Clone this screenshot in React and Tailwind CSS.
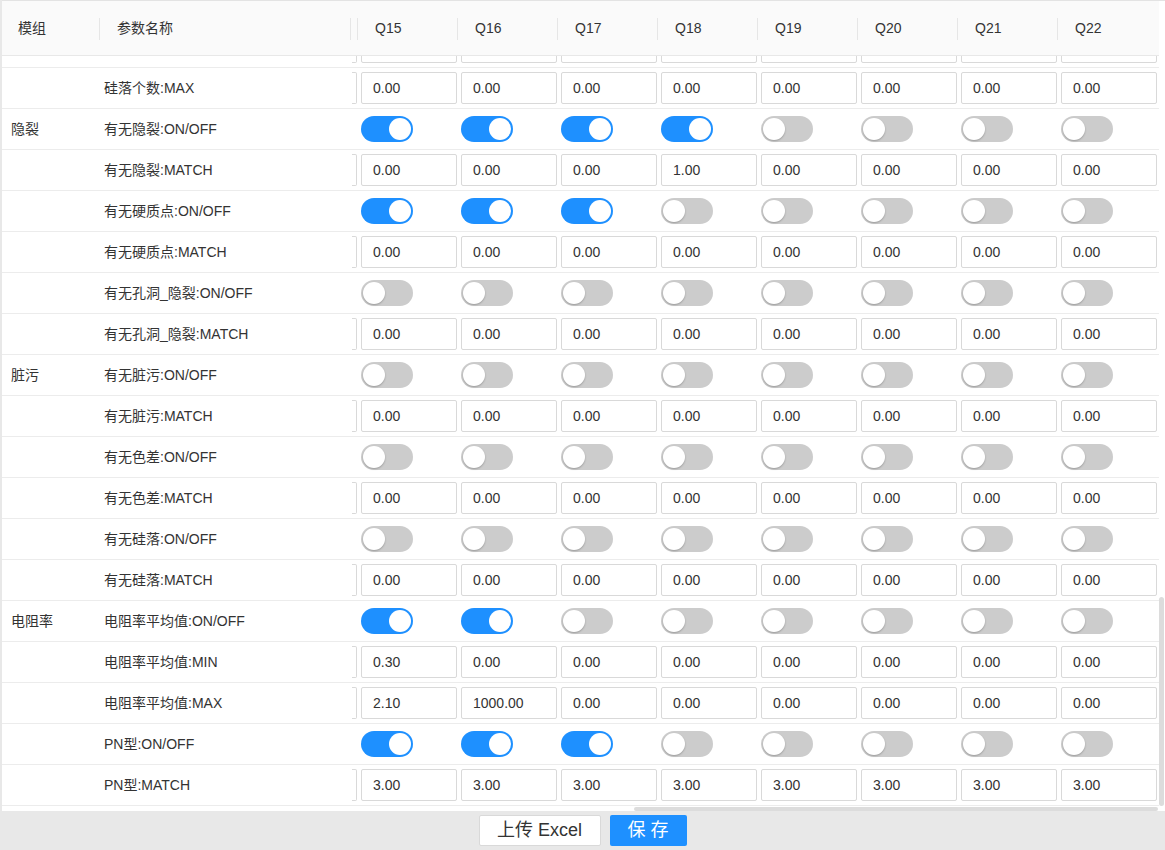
import React from "react";

const FONT = { fontFamily: '"Liberation Sans", "Noto Sans CJK SC", sans-serif' };

const COLS = ["Q15", "Q16", "Q17", "Q18", "Q19", "Q20", "Q21", "Q22"];

const z = ["0.00", "0.00", "0.00", "0.00", "0.00", "0.00", "0.00", "0.00"];
const blank = ["", "", "", "", "", "", "", ""];
const off = [false, false, false, false, false, false, false, false];

const ROWS = [
  { group: "", name: "", type: "input", vals: blank },
  { group: "", name: "硅落个数:MAX", type: "input", vals: z },
  { group: "隐裂", name: "有无隐裂:ON/OFF", type: "toggle", vals: [true, true, true, true, false, false, false, false] },
  { group: "", name: "有无隐裂:MATCH", type: "input", vals: ["0.00", "0.00", "0.00", "1.00", "0.00", "0.00", "0.00", "0.00"] },
  { group: "", name: "有无硬质点:ON/OFF", type: "toggle", vals: [true, true, true, false, false, false, false, false] },
  { group: "", name: "有无硬质点:MATCH", type: "input", vals: z },
  { group: "", name: "有无孔洞_隐裂:ON/OFF", type: "toggle", vals: off },
  { group: "", name: "有无孔洞_隐裂:MATCH", type: "input", vals: z },
  { group: "脏污", name: "有无脏污:ON/OFF", type: "toggle", vals: off },
  { group: "", name: "有无脏污:MATCH", type: "input", vals: z },
  { group: "", name: "有无色差:ON/OFF", type: "toggle", vals: off },
  { group: "", name: "有无色差:MATCH", type: "input", vals: z },
  { group: "", name: "有无硅落:ON/OFF", type: "toggle", vals: off },
  { group: "", name: "有无硅落:MATCH", type: "input", vals: z },
  { group: "电阻率", name: "电阻率平均值:ON/OFF", type: "toggle", vals: [true, true, false, false, false, false, false, false] },
  { group: "", name: "电阻率平均值:MIN", type: "input", vals: ["0.30", "0.00", "0.00", "0.00", "0.00", "0.00", "0.00", "0.00"] },
  { group: "", name: "电阻率平均值:MAX", type: "input", vals: ["2.10", "1000.00", "0.00", "0.00", "0.00", "0.00", "0.00", "0.00"] },
  { group: "", name: "PN型:ON/OFF", type: "toggle", vals: [true, true, true, false, false, false, false, false] },
  { group: "", name: "PN型:MATCH", type: "input", vals: ["3.00", "3.00", "3.00", "3.00", "3.00", "3.00", "3.00", "3.00"] },
];

function Toggle({ on }) {
  return (
    <div
      className={
        "w-[52px] h-[26px] rounded-full flex items-center px-[2px] " +
        (on ? "bg-[#1e90ff] justify-end" : "bg-[#cccccc] justify-start")
      }
    >
      <div
        className={
          "w-[22px] h-[22px] rounded-full bg-white " +
          (on ? "" : "shadow-[0_1px_2px_rgba(0,0,0,0.25)]")
        }
      />
    </div>
  );
}

function Input({ value }) {
  return (
    <div className="w-[96px] h-[32px] border border-[#d9d9d9] rounded-[2px] bg-white flex items-center pl-[11px] text-[14px] text-[#333]">
      {value}
    </div>
  );
}

function Row({ row, first }) {
  return (
    <div className={"flex h-[41px] border-b border-[#ececec] shrink-0 " + (first ? "-mt-[29px]" : "")}>
      <div className="w-[99px] shrink-0 flex items-center pl-[9px] text-[14px] text-[#333]">{row.group}</div>
      <div className="w-[251px] shrink-0 flex items-center pl-[3px] text-[14px] text-[#333]">{row.name}</div>
      <div className="w-[7px] shrink-0 flex items-center">
        {row.type === "input" ? (
          <div className="w-[5px] h-[32px] border border-l-0 border-[#d9d9d9] rounded-r-[2px]" />
        ) : null}
      </div>
      {row.vals.map((v, i) => (
        <div key={i} className="w-[100px] shrink-0 flex items-center pl-[2px]">
          {row.type === "input" ? <Input value={v} /> : <Toggle on={v} />}
        </div>
      ))}
    </div>
  );
}

function HeadCell({ w, children, sep = true, pl = "pl-[16px]" }) {
  return (
    <div className={"relative shrink-0 flex items-center text-[14px] text-[#333] " + w + " " + pl}>
      {children}
      {sep ? <div className="absolute right-[1px] top-[17px] w-px h-[22px] bg-[#e6e6e6]" /> : null}
    </div>
  );
}

export default function App() {
  return (
    <div className="w-[1165px] h-[850px] flex flex-col bg-[#e8e8e8] overflow-hidden" style={FONT}>
      <div className="flex flex-col bg-white ml-[2px] border-t border-[#e3e3e3]">
        {/* header */}
        <div className="flex h-[55px] bg-[#fafafa] border-b border-[#e8e8e8] w-[1157px]">
          <HeadCell w="w-[99px]">模组</HeadCell>
          <HeadCell w="w-[251px]">参数名称</HeadCell>
          <HeadCell w="w-[7px]" pl="pl-0"></HeadCell>
          {COLS.map((c, i) => (
            <HeadCell key={c} w="w-[100px]" sep={i < COLS.length - 1}>
              {c}
            </HeadCell>
          ))}
        </div>
        {/* body */}
        <div className="flex h-[750px]">
          <div className="w-[1157px] h-[750px] overflow-hidden flex flex-col">
            {ROWS.map((r, i) => (
              <Row key={i} row={r} first={i === 0} />
            ))}
          </div>
          <div className="w-[6px] flex flex-col">
            <div className="mt-[541px] w-[5px] h-[209px] rounded-full bg-[#dcdcdc]" />
          </div>
        </div>
        {/* horizontal scrollbar */}
        <div className="h-[5px] flex items-center">
          <div className="ml-[632px] w-[524px] h-[4px] rounded-full bg-[#dcdcdc]" />
        </div>
      </div>
      {/* footer */}
      <div className="h-[39px] flex items-center justify-center gap-[9px]">
        <button className="w-[122px] h-[31px] bg-white border border-[#d9d9d9] rounded-[2px] text-[18px] text-[#333] flex items-center justify-center">
          上传 Excel
        </button>
        <button className="w-[77px] h-[31px] bg-[#1e90ff] rounded-[2px] text-[18px] text-white flex items-center justify-center">
          保 存
        </button>
      </div>
    </div>
  );
}
